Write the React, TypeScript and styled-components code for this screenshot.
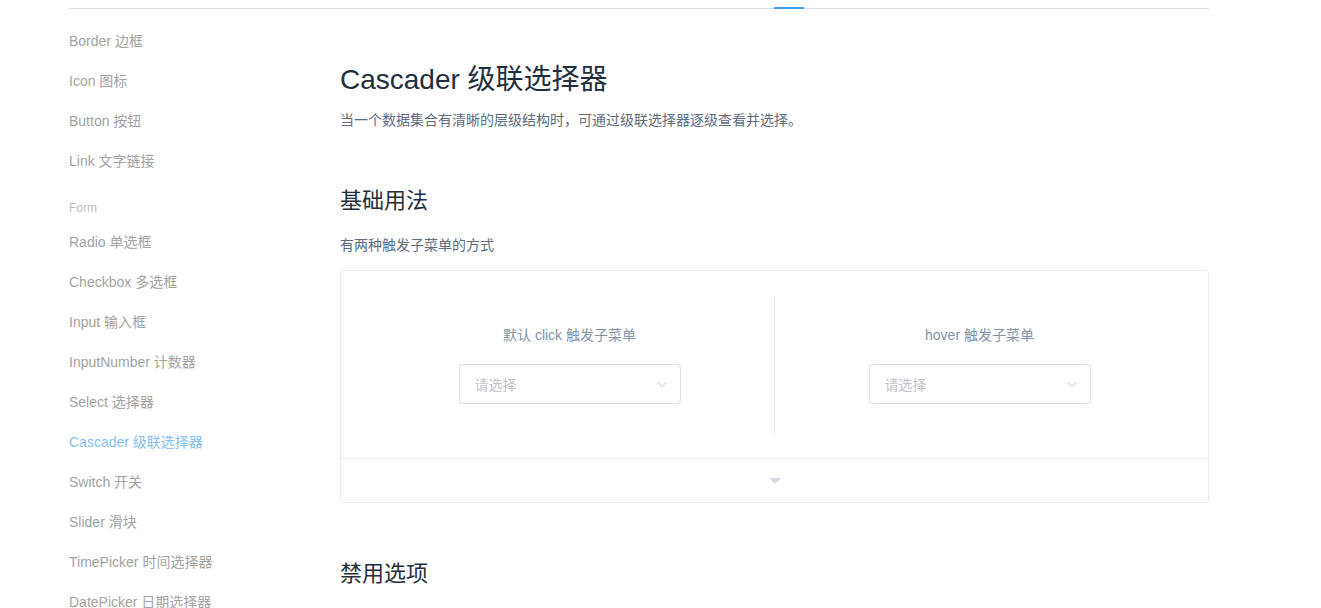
import styled, { createGlobalStyle } from 'styled-components';

const GlobalStyle = createGlobalStyle`
  * { box-sizing: border-box; }
  body {
    margin: 0;
    background: #fff;
    font-family: 'Liberation Sans', 'Noto Sans CJK SC', sans-serif;
    overflow: hidden;
  }
`;

type NavItem = { label: string; group?: boolean; active?: boolean };

const NAV: NavItem[] = [
  { label: 'Border 边框' },
  { label: 'Icon 图标' },
  { label: 'Button 按钮' },
  { label: 'Link 文字链接' },
  { label: 'Form', group: true },
  { label: 'Radio 单选框' },
  { label: 'Checkbox 多选框' },
  { label: 'Input 输入框' },
  { label: 'InputNumber 计数器' },
  { label: 'Select 选择器' },
  { label: 'Cascader 级联选择器', active: true },
  { label: 'Switch 开关' },
  { label: 'Slider 滑块' },
  { label: 'TimePicker 时间选择器' },
  { label: 'DatePicker 日期选择器' },
];

function Chevron() {
  return (
    <svg width="12" height="12" viewBox="0 0 12 12" fill="none">
      <path d="M1.5 4 L6 8.5 L10.5 4" stroke="#c0c4cc" strokeWidth="1" />
    </svg>
  );
}

function CascaderInput() {
  return (
    <Select>
      <span>请选择</span>
      <Chevron />
    </Select>
  );
}

export default function App() {
  return (
    <>
      <GlobalStyle />
      <Page>
        <Header>
          <ActiveTab />
        </Header>
        <Body>
          <Sidebar>
            {NAV.map((item) =>
              item.group ? (
                <GroupTitle key={item.label}>{item.label}</GroupTitle>
              ) : (
                <NavLink key={item.label} active={!!item.active}>
                  {item.label}
                </NavLink>
              )
            )}
          </Sidebar>
          <Content>
            <Title>Cascader 级联选择器</Title>
            <Desc>当一个数据集合有清晰的层级结构时，可通过级联选择器逐级查看并选择。</Desc>
            <SectionTitle>基础用法</SectionTitle>
            <Para>有两种触发子菜单的方式</Para>
            <DemoBlock>
              <Source>
                <DemoCol divider>
                  <Demonstration>默认 click 触发子菜单</Demonstration>
                  <CascaderInput />
                </DemoCol>
                <DemoCol>
                  <Demonstration>hover 触发子菜单</Demonstration>
                  <CascaderInput />
                </DemoCol>
              </Source>
              <Control>
                <Caret />
              </Control>
            </DemoBlock>
            <SectionTitle second>禁用选项</SectionTitle>
          </Content>
        </Body>
      </Page>
    </>
  );
}

const Page = styled.div`
  width: 1140px;
  margin-left: 69px;
`;

const Header = styled.div`
  position: relative;
  height: 9px;
  border-bottom: 1px solid #dcdfe6;
`;

const ActiveTab = styled.div`
  position: absolute;
  left: 705px;
  bottom: -1px;
  width: 30px;
  height: 2px;
  background: #409eff;
`;

const Body = styled.div`
  display: flex;
`;

const Sidebar = styled.nav`
  width: 271px;
  flex-shrink: 0;
  padding-top: 12px;
  display: flex;
  flex-direction: column;
`;

const NavLink = styled.a<{ active: boolean }>`
  display: block;
  height: 40px;
  line-height: 40px;
  font-size: 14px;
  color: ${(p) => (p.active ? '#85c0f8' : '#a3a3a3')};
  white-space: nowrap;
`;

const GroupTitle = styled.div`
  margin-top: 14px;
  height: 27px;
  line-height: 27px;
  font-size: 12px;
  color: #bdbdbd;
`;

const Content = styled.main`
  flex: 1;
  min-width: 0;
`;

const Title = styled.h2`
  margin: 51px 0 0;
  font-size: 28px;
  line-height: 40px;
  font-weight: 400;
  color: #1f2f3d;
`;

const Desc = styled.p`
  margin: 9px 0 0;
  font-size: 14px;
  line-height: 22px;
  color: #5e6d82;
`;

const SectionTitle = styled.h3<{ second?: boolean }>`
  margin: ${(p) => (p.second ? '56px' : '55px')} 0 0;
  font-size: 22px;
  line-height: 30px;
  font-weight: 400;
  color: #1f2f3d;
`;

const Para = styled.p`
  margin: 18px 0 0;
  font-size: 14px;
  line-height: 22px;
  color: #5e6d82;
`;

const DemoBlock = styled.div`
  margin-top: 14px;
  border: 1px solid #ebebeb;
  border-radius: 3px;
`;

const Source = styled.div`
  display: flex;
  padding: 24px;
`;

const DemoCol = styled.div<{ divider?: boolean }>`
  flex: 1;
  padding: 30px 0;
  text-align: center;
  border-right: ${(p) => (p.divider ? '1px solid #eff2f6' : 'none')};
`;

const Demonstration = styled.span`
  display: block;
  font-size: 14px;
  line-height: 20px;
  color: #8492a6;
  margin-bottom: 19px;
`;

const Select = styled.div`
  display: inline-flex;
  align-items: center;
  justify-content: space-between;
  width: 222px;
  height: 40px;
  padding: 0 12px 0 15px;
  border: 1px solid #dcdfe6;
  border-radius: 4px;
  font-size: 14px;
  color: #c0c4cc;
  text-align: left;
`;

const Control = styled.div`
  height: 44px;
  border-top: 1px solid #eaeefb;
  display: flex;
  align-items: center;
  justify-content: center;
`;

const Caret = styled.div`
  width: 0;
  height: 0;
  border-left: 6px solid transparent;
  border-right: 6px solid transparent;
  border-top: 6px solid #d3dce6;
`;
